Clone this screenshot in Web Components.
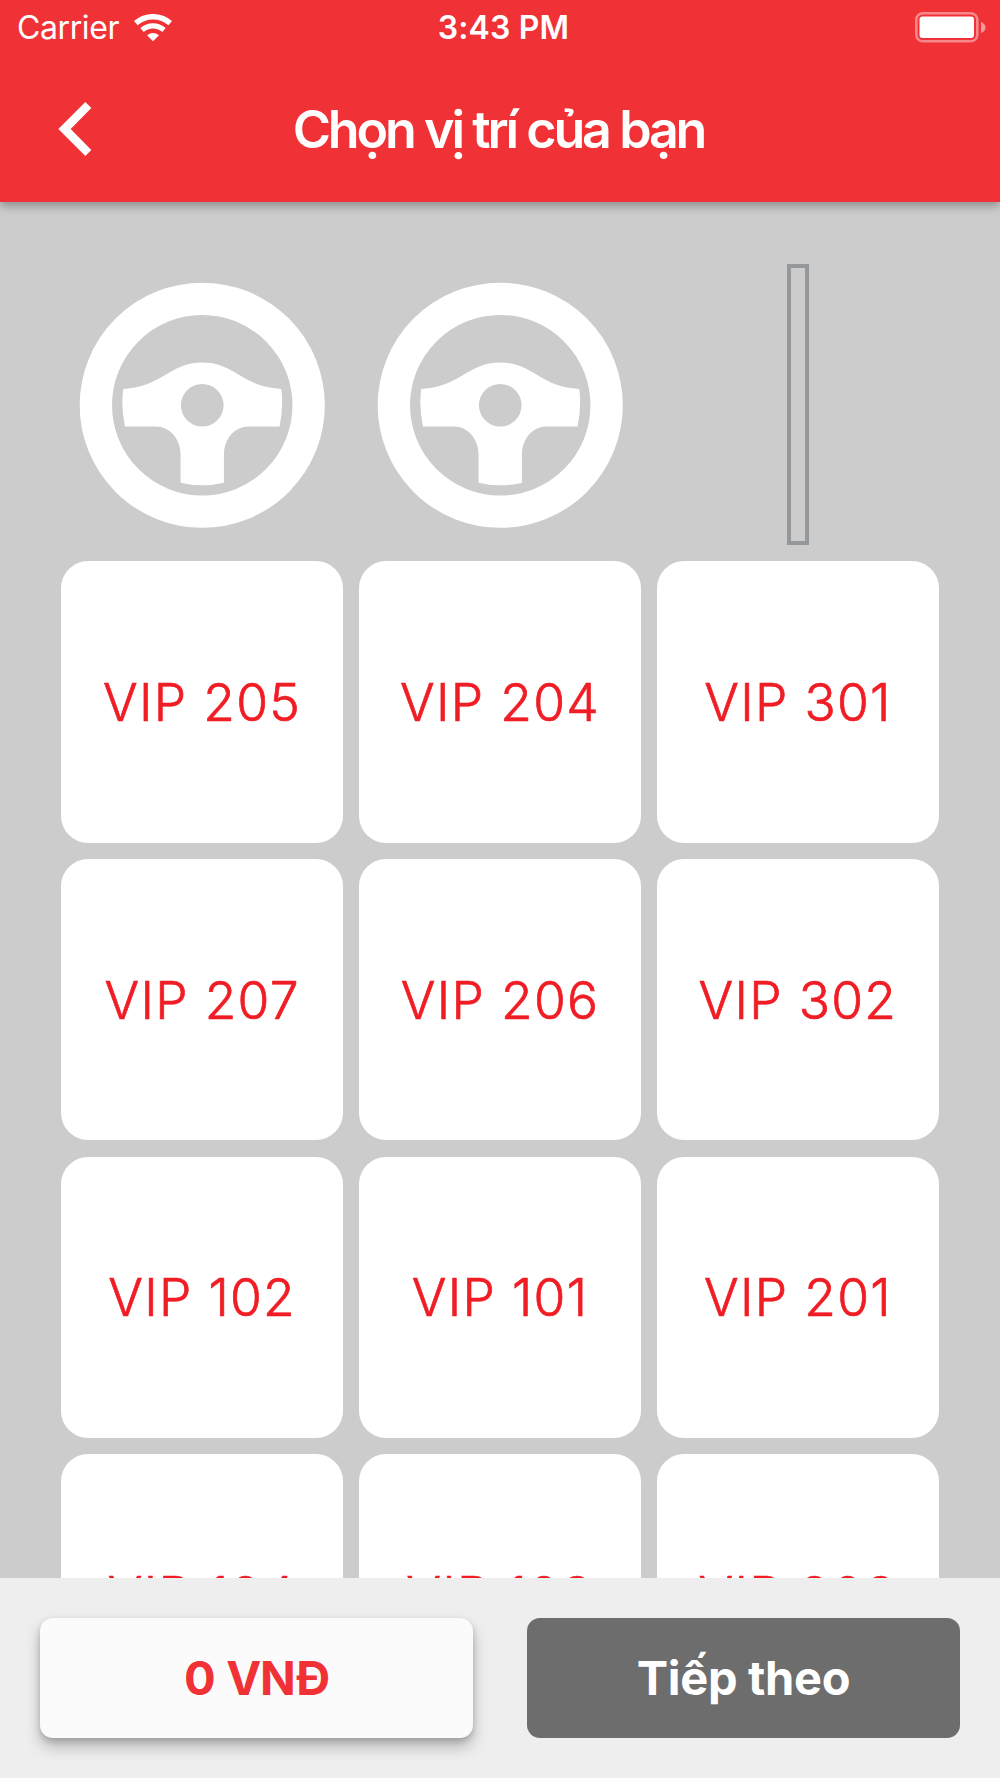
<!DOCTYPE html>
<html lang="vi">
<head>
<meta charset="utf-8">
<title>Chọn vị trí của bạn</title>
<style>
  html, body { margin: 0; padding: 0; }
  body { width: 1000px; height: 1778px; overflow: hidden; background: #ccc; font-family: Inter, "Liberation Sans", sans-serif; }
</style>
</head>
<body>
<seat-screen></seat-screen>
<script>
class BaseElement extends HTMLElement {
  constructor() {
    super();
    this.attachShadow({ mode: 'open' }).innerHTML = this.render();
  }
}

customElements.define('status-bar', class extends BaseElement {
  render() {
    return `<style>
      :host { display: grid; grid-template-columns: 1fr auto 1fr; align-items: center; height: 55px; padding: 0 14px 0 17px; color: #fff; font-size: 32px; line-height: 55px; }
      .left { display: flex; align-items: center; gap: 15px; }
      .carrier { letter-spacing: -.400px; }
      .time { font-weight: 600; letter-spacing: .150px; padding-left: 4px; }
      .battery { justify-self: end; }
      svg { display: block; }
    </style>
    <div class="left">
      <span class="carrier">Carrier</span>
      <svg width="38" height="28" viewBox="403 40 114 84">
        <path d="M408.500 67.500A78 78 0 0 1 511.500 67.500" fill="none" stroke="#fff" stroke-width="16.500"/>
        <path d="M427 88A50 50 0 0 1 493 88" fill="none" stroke="#fff" stroke-width="15.500"/>
        <path d="M442 103.500Q460 90 478 103.500L460 122Z" fill="#fff"/>
      </svg>
    </div>
    <span class="time">3:43 PM</span>
    <svg class="battery" width="71" height="31" viewBox="0 0 71 31">
      <rect x="1.300" y="1.300" width="61" height="28" rx="6.500" fill="none" stroke="#fff" stroke-opacity=".42" stroke-width="2.600"/>
      <rect x="4.500" y="4.500" width="54.500" height="21.500" rx="3" fill="#fff"/>
      <path d="M66 10Q70.500 12 70.500 15.500T66 21Z" fill="#fff" fill-opacity=".5"/>
    </svg>`;
  }
});

customElements.define('nav-header', class extends BaseElement {
  render() {
    return `<style>
      :host { display: block; box-sizing: border-box; height: 202.400px; background: #f03136; box-shadow: 0 4px 9px rgba(0,0,0,.3); position: relative; z-index: 1; color: #fff; }
      .nav { display: grid; grid-template-columns: 160px 1fr 160px; align-items: center; height: 146px; }
      .back { display: block; margin-left: 58px; }
      h1 { margin: 0; padding: 2px 3px 0 0; text-align: center; font-size: 52px; line-height: 146px; font-weight: 600; letter-spacing: -3.200px; word-spacing: .600px; white-space: nowrap; }
    </style>
    <status-bar></status-bar>
    <div class="nav">
      <svg class="back" width="34" height="54" viewBox="174 303 102 162"><path d="M175 384L256 303L274 321L212 384L274 447L256 465Z" fill="#fff"/></svg>
      <h1><slot></slot></h1>
    </div>`;
  }
});

customElements.define('driver-seat', class extends BaseElement {
  render() {
    return `<style>:host { display: block; } svg { display: block; width: 100%; height: 100%; }</style>
    <svg viewBox="-423.500 -423.500 844 844">
      <circle r="319" fill="none" stroke="#fff" stroke-width="97"/>
      <path fill="#fff" fill-rule="evenodd" d="M-237 -49C-120 -54 -98 -128 0 -128S120 -54 237 -49Q244 6 232 64H138C100 64 65 98 65 150V232Q0 248 -65 232V150C-65 98 -100 64 -138 64H-232Q-244 6 -237 -49ZM64 0A64 64 0 1 0 -64 0A64 64 0 1 0 64 0Z"/>
    </svg>`;
  }
});

customElements.define('aisle-door', class extends BaseElement {
  render() {
    return `<style>
      :host { display: flex; justify-content: center; }
      i { box-sizing: border-box; width: 22.500px; height: 100%; border: 4px solid #94989b; }
    </style><i></i>`;
  }
});

customElements.define('seat-tile', class extends BaseElement {
  render() {
    return `<style>
      :host { display: flex; align-items: center; justify-content: center; background: #fff; border-radius: 27px; color: #f01d25; font-size: 51.500px; font-weight: 300; -webkit-text-stroke: .700px #f01d25; letter-spacing: 1.300px; white-space: nowrap; }
    </style><slot></slot>`;
  }
});

customElements.define('action-button', class extends BaseElement {
  render() {
    return `<style>
      :host { flex: 1; display: flex; align-items: center; justify-content: center; box-sizing: border-box; height: 120px; padding-bottom: 1px; border-radius: 13px; background: #6d6d6d; color: #fff; font-size: 47px; font-weight: 700; letter-spacing: -.300px; white-space: nowrap; }
      :host([raised]) { background: #fbfbfb; color: #f03136; letter-spacing: -1.300px; word-spacing: 2px; box-shadow: 0 9px 15px rgba(0,0,0,.24), 0 3px 6px rgba(0,0,0,.16); }
    </style><slot></slot>`;
  }
});

customElements.define('seat-screen', class extends BaseElement {
  render() {
    return `<style>
      :host { display: flex; flex-direction: column; height: 1778px; background: #ccc; }
      main { flex: 1; min-height: 0; overflow: hidden; padding: 61.300px 61.400px 0; }
      .grid { display: grid; grid-template-columns: repeat(3, 281.500px); grid-auto-rows: 281.500px; gap: 16.150px 16.400px; }
      footer { display: flex; gap: 54px; height: 200px; box-sizing: border-box; padding: 40px 40px 0; background: #eee; }
    </style>
    <nav-header>Chọn vị trí của bạn</nav-header>
    <main><div class="grid">
      <driver-seat></driver-seat><driver-seat></driver-seat><aisle-door></aisle-door>
      <seat-tile>VIP 205</seat-tile><seat-tile>VIP 204</seat-tile><seat-tile>VIP 301</seat-tile>
      <seat-tile>VIP 207</seat-tile><seat-tile>VIP 206</seat-tile><seat-tile>VIP 302</seat-tile>
      <seat-tile>VIP 102</seat-tile><seat-tile>VIP 101</seat-tile><seat-tile>VIP 201</seat-tile>
      <seat-tile>VIP 104</seat-tile><seat-tile>VIP 103</seat-tile><seat-tile>VIP 203</seat-tile>
    </div></main>
    <footer><action-button raised>0 VNĐ</action-button><action-button>Tiếp theo</action-button></footer>`;
  }
});
</script>
</body>
</html>
